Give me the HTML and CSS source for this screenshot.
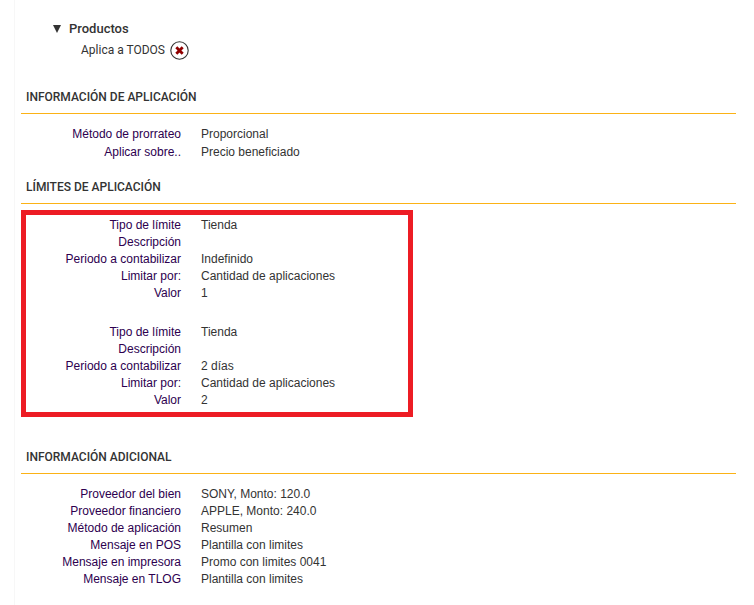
FILE: index.html
```html
<!DOCTYPE html>
<html lang="es">
<head>
  <meta charset="UTF-8" />
  <title>Detalle de promoción</title>
  <link rel="stylesheet" href="styles.css">
</head>
<body>

  <main class="panel">
    <details class="productos" open>
      <summary>
        <svg class="arrow" viewBox="0 0 8 8" aria-hidden="true"><path d="M0 0h8L4 8z"/></svg>
        Productos
      </summary>
      <div class="condicion">
        <span>Aplica a TODOS</span>
        <button type="button" class="quitar" aria-label="Quitar">
          <svg viewBox="0 0 19 19" aria-hidden="true">
            <circle cx="9.5" cy="9.5" r="8.7" fill="#fff" stroke="#333" stroke-width="1.1"/>
            <path d="M6.3 6.3l6.4 6.4M12.7 6.3l-6.4 6.4" stroke="#900000" stroke-width="2.8"/>
          </svg>
        </button>
      </div>
    </details>

    <section class="seccion">
      <h2>INFORMACIÓN DE APLICACIÓN</h2>
      <dl class="datos datos-prorrateo">
        <dt>Método de prorrateo</dt><dd>Proporcional</dd>
        <dt>Aplicar sobre..</dt><dd>Precio beneficiado</dd>
      </dl>
    </section>

    <section class="seccion seccion-limites">
      <h2>LÍMITES DE APLICACIÓN</h2>
      <div class="limites">
        <dl class="datos">
          <dt>Tipo de límite</dt><dd>Tienda</dd>
          <dt>Descripción</dt><dd></dd>
          <dt>Periodo a contabilizar</dt><dd>Indefinido</dd>
          <dt>Limitar por:</dt><dd>Cantidad de aplicaciones</dd>
          <dt>Valor</dt><dd>1</dd>
        </dl>
        <dl class="datos">
          <dt>Tipo de límite</dt><dd>Tienda</dd>
          <dt>Descripción</dt><dd></dd>
          <dt>Periodo a contabilizar</dt><dd>2 días</dd>
          <dt>Limitar por:</dt><dd>Cantidad de aplicaciones</dd>
          <dt>Valor</dt><dd>2</dd>
        </dl>
      </div>
    </section>

    <section class="seccion seccion-adicional">
      <h2>INFORMACIÓN ADICIONAL</h2>
      <dl class="datos">
        <dt>Proveedor del bien</dt><dd>SONY, Monto: 120.0</dd>
        <dt>Proveedor financiero</dt><dd>APPLE, Monto: 240.0</dd>
        <dt>Método de aplicación</dt><dd>Resumen</dd>
        <dt>Mensaje en POS</dt><dd>Plantilla con limites</dd>
        <dt>Mensaje en impresora</dt><dd>Promo con limites 0041</dd>
        <dt>Mensaje en TLOG</dt><dd>Plantilla con limites</dd>
      </dl>
    </section>
  </main>

</body>
</html>
```
FILE: styles.css
```css
* {
  box-sizing: border-box;
}
body {
  margin: 0;
  background: #fff;
  color: #333;
  font-family: "Liberation Sans", Arial, sans-serif;
  font-size: 12px;
  line-height: 17px;
}
.panel {
  min-height: 100vh;
  margin-left: 14px;
  padding: 19px 18px 16px 6px;
  border-left: 1px solid #f7f7f7;
}

/* Productos */
.productos {
  padding-left: 32px;
  font-family: Roboto, sans-serif;
  line-height: 20px;
}
.productos summary {
  display: flex;
  align-items: center;
  gap: 8px;
  font-size: 13px;
  font-weight: 500;
  cursor: pointer;
}
.arrow {
  width: 8px;
  height: 8px;
  fill: #333;
}
.condicion {
  display: flex;
  align-items: center;
  gap: 5px;
  padding: 1px 0 0 28px;
}
.quitar {
  width: 19px;
  height: 20px;
  padding: 0;
  border: none;
  background: none;
  cursor: pointer;
}
.quitar svg {
  display: block;
  width: 19px;
  height: 19px;
}

/* Secciones */
.seccion {
  margin-top: 29px;
}
.seccion-limites {
  margin-top: 18px;
}
.seccion-adicional {
  margin-top: 32px;
}
.seccion h2 {
  margin: 0;
  padding: 0 5px 7px;
  border-bottom: 1px solid #fbb216;
  font-family: Roboto, sans-serif;
  font-size: 12px;
  font-weight: 500;
}
.datos {
  display: grid;
  grid-template-columns: 160px 1fr;
  grid-auto-rows: minmax(17px, auto);
  column-gap: 20px;
  margin: 12px 0 0;
}
.datos-prorrateo {
  row-gap: 1px;
}
.datos dt {
  color: #2d004f;
  text-align: right;
}
.datos dd {
  margin: 0;
}

/* Recuadro rojo de los límites */
.limites {
  max-width: 392px;
  margin-top: 6px;
  padding: 2px 0 3px;
  border: 5px solid #ed1c24;
}
.limites .datos {
  grid-template-columns: 155px 1fr;
  margin: 0;
}
.limites .datos + .datos {
  margin-top: 22px;
}
```
